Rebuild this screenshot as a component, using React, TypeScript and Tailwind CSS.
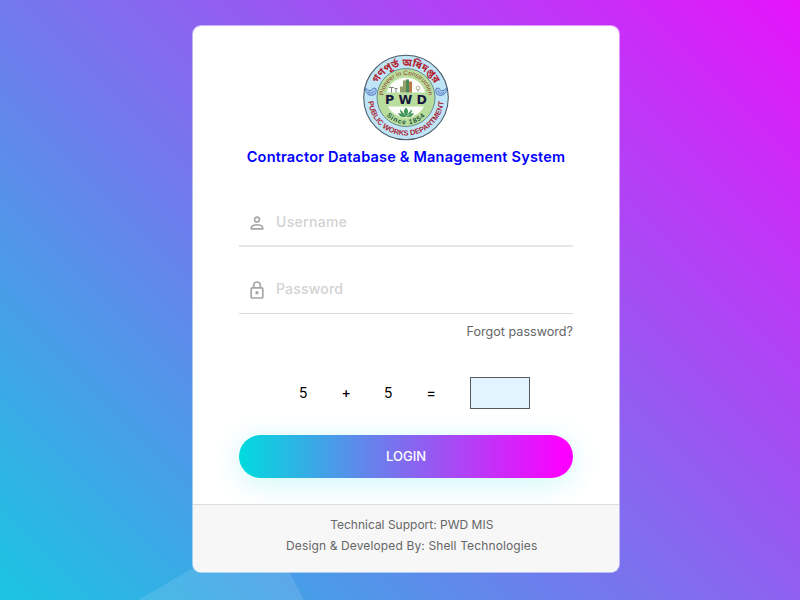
import React from "react";

function Logo() {
  return (
    <svg width="88" height="88" viewBox="-44 -43.5 88 88" className="block">
      <defs>
        <path id="arcTop" d="M -31.5 0 A 31.5 31.5 0 0 1 31.5 0" />
        <path id="arcBottom" d="M -35.7 -13 A 38 38 0 1 0 35.7 -13" />
        <path id="innerTop" d="M -21.1 7.7 A 22.5 22.5 0 1 1 21.1 7.7" />
        <path id="innerBottom" d="M -26.8 0 A 26.8 26.8 0 0 0 26.8 0" />
      </defs>
      <circle r="42.3" fill="#bfe5f7" stroke="#4c5a66" strokeWidth="1.1" />
      <circle r="29" fill="#b9dd9c" stroke="#5e7f8a" strokeWidth="0.9" />
      <circle r="20" fill="#fcfdf8" />
      <rect x="-21" y="-5" width="42" height="14" fill="#b9dd9c" />
      <g fill="#9cc3ec" stroke="#4a72b4" strokeWidth="0.8">
        <path d="M-41 -10 q3 4 6 3 q2 -4 5 -2 q1 3 -1 6 q-4 2 -7 0 q-3 -3 -3 -7z M-38 -5 q3 2 6 -1" />
        <path d="M41 -10 q-3 4 -6 3 q-2 -4 -5 -2 q-1 3 1 6 q4 2 7 0 q3 -3 3 -7z M38 -5 q-3 2 -6 -1" />
      </g>
      <path d="M-6 -5 V-11 H-3 V-17 H0 V-5z" fill="#94a06a" />
      <path d="M0 -5 V-18 H3 V-5z" fill="#4b8a58" />
      <path d="M3 -5 V-16 H6 V-5z" fill="#b87b45" />
      <path d="M-17 -10 H-12 M-14.5 -5 V-10 M-10 -5 V-9 M-11.5 -9 H-8.5 M12 -6 V-8" stroke="#7e8880" strokeWidth="1" />
      <circle cx="12" cy="-9.5" r="1.8" fill="none" stroke="#a5a58a" strokeWidth="0.8" />
      <path d="M0 19 Q-4 14 0 10 Q4 14 0 19 M0 19 Q-5 12 -6 12 Q-6 17 0 19 M0 19 Q5 12 6 12 Q6 17 0 19 M-8 16 Q-5 21 0 19 Q5 21 8 16 Q5 15 0 19 Q-5 15 -8 16" fill="#3f9557" />
      <g fontFamily="'Liberation Sans', sans-serif" fontWeight="700">
        <text fontSize="10.3" fill="#b3202c" fontFamily="'Noto Sans Bengali', 'Noto Sans', sans-serif">
          <textPath href="#arcTop" startOffset="50%" textAnchor="middle">গণপূর্ত অধিদপ্তর</textPath>
        </text>
        <text fontSize="7.4" fill="#ab2634">
          <textPath href="#arcBottom" startOffset="50%" textAnchor="middle">PUBLIC WORKS DEPARTMENT</textPath>
        </text>
        <text fontSize="6.4" fontWeight="400" fill="#8f3a28">
          <textPath href="#innerTop" startOffset="50%" textAnchor="middle">Pioneer in Construction</textPath>
        </text>
        <text fontSize="6.8" fill="#1e5a3c" letterSpacing="0.9">
          <textPath href="#innerBottom" startOffset="50%" textAnchor="middle">Since 1854</textPath>
        </text>
      </g>
      <text y="6.5" textAnchor="middle" fontFamily="'DejaVu Sans', sans-serif" fontWeight="700" fontSize="12.5" fill="#15163f" textLength="42">P W D</text>
    </svg>
  );
}

function PersonIcon() {
  return (
    <svg className="mt-[3px]" width="18" height="18" viewBox="0 0 18 18" fill="none" stroke="#a6a6a6" strokeWidth="1.6">
      <circle cx="9" cy="5.6" r="2.5" />
      <path d="M3.3 14.9 V13.6 C3.3 11.9 6.6 10.8 9 10.8 C11.4 10.8 14.7 11.9 14.7 13.6 V14.9 Z" />
    </svg>
  );
}

function LockIcon() {
  return (
    <svg className="mt-[3px]" width="18" height="20" viewBox="0 0 18 20" fill="none" stroke="#a6a6a6" strokeWidth="1.7">
      <rect x="3.2" y="7.8" width="11.6" height="10.2" rx="1" />
      <path d="M5.7 7.8 V5.3 a3.3 3.3 0 0 1 6.6 0 V7.8" />
      <circle cx="9" cy="12.8" r="1.7" fill="#a6a6a6" stroke="none" />
    </svg>
  );
}

export default function App() {
  return (
    <div className="relative flex h-[600px] w-[800px] overflow-hidden bg-[linear-gradient(45deg,#1bc5e2_0%,#e614fb_100%)] pl-[192px] pt-[25px] font-['Inter','Liberation_Sans',sans-serif]">
      <svg className="absolute bottom-0 left-[138px]" width="168" height="44" viewBox="0 0 168 44">
        <path d="M0 44 L76 0 H143 L166 44 Z" fill="#fff" fillOpacity="0.11" />
      </svg>
      <main className="relative flex h-[547.5px] w-[427.5px] flex-col overflow-hidden rounded-[9px] border border-white/50 bg-white bg-clip-padding">
        <div className="flex h-[478px] flex-col px-[46px] pt-[28px]">
          <div className="flex w-[334px] justify-center"><Logo /></div>
          <h1 className="mt-[5px] h-5 w-[334px] whitespace-nowrap text-center text-[14.5px] font-semibold leading-5 tracking-[0.2px] text-[#0000ff]">
            Contractor Database &amp; Management System
          </h1>
          <div className="mt-[29px] flex h-[51px] w-[334px] items-center border-b-2 border-[#e6e6e6] pl-[9px] pt-[2px]">
            <PersonIcon />
            <span className="ml-[10px] text-[14px] font-medium tracking-[0.3px] text-[#d2d2d2]">Username</span>
          </div>
          <div className="mt-[16px] flex h-[51px] w-[334px] items-center border-b border-[#d9d9d9] pl-[9px] pt-px">
            <LockIcon />
            <span className="ml-[10px] text-[14px] font-medium tracking-[0.2px] text-[#d2d2d2]">Password</span>
          </div>
          <a className="mt-[8px] block h-5 w-[334px] text-right text-[12.6px] leading-5 text-[#666]">Forgot password?</a>
          <div className="mt-[35px] flex h-8 items-center pl-[60px] text-[14px] text-black">
            <span className="w-[42.5px] pb-[2px]">5</span>
            <span className="w-[42.5px] pb-[2px] font-medium">+</span>
            <span className="w-[42.5px] pb-[2px]">5</span>
            <span className="w-[43.5px] pb-[2px] font-medium">=</span>
            <input aria-label="Answer" className="h-8 w-[60px] border border-[#555b5e] bg-[#e1f4ff]" />
          </div>
          <button className="mt-[26px] h-[43px] w-[334px] shrink-0 rounded-full bg-[linear-gradient(90deg,#00dbde,#fc00ff_97%)] text-[13px] font-medium text-white shadow-[0_5px_30px_rgba(3,216,222,0.2)]">
            LOGIN
          </button>
        </div>
        <footer className="flex flex-1 flex-col items-center border-t border-[#dcdede] bg-[#f7f7f7] pl-[12px] pt-[9px] text-[12px] leading-[21px] text-[#666]">
          <p>Technical Support: PWD MIS</p>
          <p className="tracking-[0.13px]">Design &amp; Developed By: Shell Technologies</p>
        </footer>
      </main>
    </div>
  );
}
